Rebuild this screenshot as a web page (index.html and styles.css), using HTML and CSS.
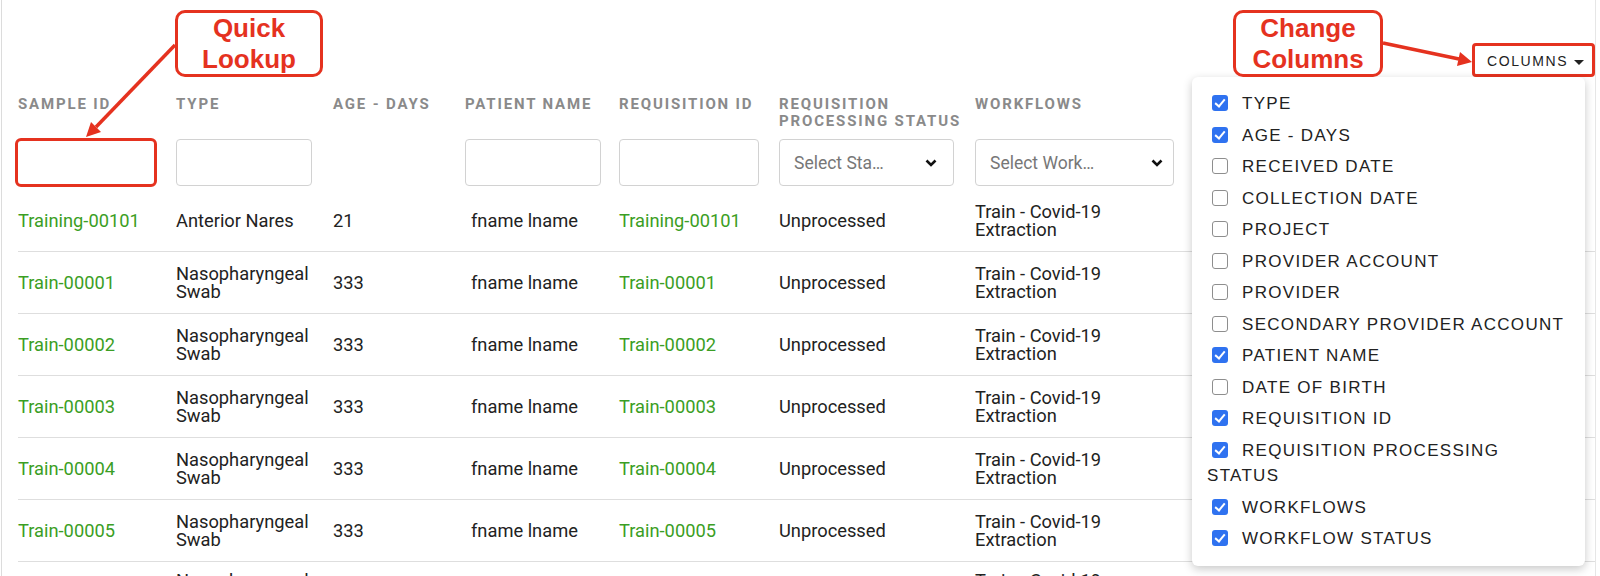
FILE: index.html
```html
<!DOCTYPE html>
<html lang="en">
	<head>
		<meta charset="utf-8" />
		<title>Samples</title>
		<link rel="stylesheet" href="styles.css">
	</head>
	<body>
		<div class="page">
			<div class="toolbar">
				<button class="columns-btn">COLUMNS<span class="caret"></span></button>
			</div>

			<table class="samples">
				<colgroup>
					<col style="width:158px"><col style="width:157px"><col style="width:132px"><col style="width:154px">
					<col style="width:160px"><col style="width:196px"><col style="width:215px"><col>
				</colgroup>
				<thead>
					<tr class="labels">
						<th>SAMPLE ID</th>
						<th>TYPE</th>
						<th>AGE - DAYS</th>
						<th>PATIENT NAME</th>
						<th>REQUISITION ID</th>
						<th>REQUISITION PROCESSING STATUS</th>
						<th>WORKFLOWS</th>
						<th></th>
					</tr>
					<tr class="filters">
						<th><input class="filter lookup" type="text"></th>
						<th><input class="filter" type="text"></th>
						<th></th>
						<th><input class="filter" type="text"></th>
						<th><input class="filter req" type="text"></th>
						<th><div class="select status">Select Sta…<svg width="12" height="8" viewBox="0 0 12 8"><path d="M1.5 1.5 L6 6 L10.5 1.5" fill="none" stroke="#111" stroke-width="2.6"/></svg></div></th>
						<th><div class="select flows">Select Work…<svg width="12" height="8" viewBox="0 0 12 8"><path d="M1.5 1.5 L6 6 L10.5 1.5" fill="none" stroke="#111" stroke-width="2.6"/></svg></div></th>
						<th></th>
					</tr>
				</thead>
				<tbody>
					<tr>
						<td><a href="#">Training-00101</a></td>
						<td>Anterior Nares</td>
						<td>21</td>
						<td class="pname">fname lname</td>
						<td><a href="#">Training-00101</a></td>
						<td>Unprocessed</td>
						<td>Train - Covid-19 Extraction</td>
						<td></td>
					</tr>
					<tr>
						<td><a href="#">Train-00001</a></td>
						<td>Nasopharyngeal Swab</td>
						<td>333</td>
						<td class="pname">fname lname</td>
						<td><a href="#">Train-00001</a></td>
						<td>Unprocessed</td>
						<td>Train - Covid-19 Extraction</td>
						<td></td>
					</tr>
					<tr>
						<td><a href="#">Train-00002</a></td>
						<td>Nasopharyngeal Swab</td>
						<td>333</td>
						<td class="pname">fname lname</td>
						<td><a href="#">Train-00002</a></td>
						<td>Unprocessed</td>
						<td>Train - Covid-19 Extraction</td>
						<td></td>
					</tr>
					<tr>
						<td><a href="#">Train-00003</a></td>
						<td>Nasopharyngeal Swab</td>
						<td>333</td>
						<td class="pname">fname lname</td>
						<td><a href="#">Train-00003</a></td>
						<td>Unprocessed</td>
						<td>Train - Covid-19 Extraction</td>
						<td></td>
					</tr>
					<tr>
						<td><a href="#">Train-00004</a></td>
						<td>Nasopharyngeal Swab</td>
						<td>333</td>
						<td class="pname">fname lname</td>
						<td><a href="#">Train-00004</a></td>
						<td>Unprocessed</td>
						<td>Train - Covid-19 Extraction</td>
						<td></td>
					</tr>
					<tr>
						<td><a href="#">Train-00005</a></td>
						<td>Nasopharyngeal Swab</td>
						<td>333</td>
						<td class="pname">fname lname</td>
						<td><a href="#">Train-00005</a></td>
						<td>Unprocessed</td>
						<td>Train - Covid-19 Extraction</td>
						<td></td>
					</tr>
					<tr class="cut">
						<td></td>
						<td>Nasopharyngeal Swab</td>
						<td></td>
						<td></td>
						<td></td>
						<td></td>
						<td>Train - Covid-19 Extraction</td>
						<td></td>
					</tr>
				</tbody>
			</table>

			<!-- column picker, open -->
			<div class="menu">
				<div class="opt"><span class="box on"></span>TYPE</div>
				<div class="opt"><span class="box on"></span>AGE - DAYS</div>
				<div class="opt"><span class="box"></span>RECEIVED DATE</div>
				<div class="opt"><span class="box"></span>COLLECTION DATE</div>
				<div class="opt"><span class="box"></span>PROJECT</div>
				<div class="opt"><span class="box"></span>PROVIDER ACCOUNT</div>
				<div class="opt"><span class="box"></span>PROVIDER</div>
				<div class="opt"><span class="box"></span>SECONDARY PROVIDER ACCOUNT</div>
				<div class="opt"><span class="box on"></span>PATIENT NAME</div>
				<div class="opt"><span class="box"></span>DATE OF BIRTH</div>
				<div class="opt"><span class="box on"></span>REQUISITION ID</div>
				<div class="opt"><span class="box on"></span>REQUISITION PROCESSING STATUS</div>
				<div class="opt"><span class="box on"></span>WORKFLOWS</div>
				<div class="opt"><span class="box on"></span>WORKFLOW STATUS</div>
			</div>

			<!-- annotations -->
			<div class="callout quick">Quick<br>Lookup</div>
			<div class="callout change">Change<br>Columns</div>
			<svg class="arrows" width="1600" height="576" viewBox="0 0 1600 576">
				<line x1="175" y1="45" x2="96" y2="127" stroke="#e5321f" stroke-width="3.5"/>
				<polygon points="86,137 101,132 91,122" fill="#e5321f"/>
				<line x1="1383" y1="43" x2="1459" y2="59" stroke="#e5321f" stroke-width="3.5"/>
				<polygon points="1472,62 1457,66 1460,52" fill="#e5321f"/>
			</svg>
		</div>
	</body>
</html>
```

FILE: styles.css
```css
body{
	margin: 0;
	background-color: #fff;
	font-family: Roboto, "Liberation Sans", sans-serif;
	color: #222;
}

.page{
	position: relative;
	margin-left: 1px;
	width: 1593px;
	height: 576px;
	overflow: hidden;
	border-left: 1px solid #dcdcdc;
	border-right: 1px solid #e6e6e6;
}

.toolbar{
	height: 94px;
	box-sizing: border-box;
	padding-top: 43px;
	display: flex;
	justify-content: flex-end;
	align-items: flex-start;
}

.columns-btn{
	height: 34px;
	width: 123px;
	box-sizing: border-box;
	padding: 2px 0 0 12px;
	border: 3px solid #e5321f;
	border-radius: 4px;
	background: #fff;
	display: flex;
	align-items: center;
	font-family: "Liberation Sans", sans-serif;
	font-size: 14px;
	letter-spacing: 1.6px;
	color: #222;
}

.caret{
	margin-left: 6px;
	margin-top: 2px;
	border-left: 5px solid transparent;
	border-right: 5px solid transparent;
	border-top: 5px solid #222;
}

.samples{
	margin-left: 16px;
	width: 1577px;
	table-layout: fixed;
	border-collapse: collapse;
}

.samples th{
	text-align: left;
	padding: 0;
}

.labels th{
	height: 43px;
	padding-top: 2px;
	vertical-align: top;
	font-size: 15px;
	line-height: 17px;
	font-weight: bold;
	letter-spacing: 1.85px;
	color: #8a8a8a;
}

.filters th{
	height: 47px;
	padding-bottom: 4px;
	vertical-align: top;
}

.filter{
	display: block;
	width: 136px;
	height: 47px;
	box-sizing: border-box;
	border: 1px solid #d2d2d2;
	border-radius: 4px;
	background: #fff;
	margin: 0;
}

.filter.lookup{
	width: 142px;
	height: 49px;
	margin: -1px 0 -1px -3px;
	border: 3px solid #e5321f;
	border-radius: 6px;
}

.filter.req{
	width: 140px;
}

.select{
	height: 47px;
	box-sizing: border-box;
	border: 1px solid #d2d2d2;
	border-radius: 4px;
	display: flex;
	align-items: center;
	justify-content: space-between;
	padding: 0 16px 0 14px;
	font-size: 17.5px;
	font-weight: normal;
	color: #777;
	letter-spacing: 0;
}

.select.status{
	width: 175px;
}

.select.flows{
	width: 199px;
	padding-right: 10px;
}

.samples td{
	height: 61px;
	padding: 0 20px 0 0;
	vertical-align: middle;
	font-size: 18.3px;
	line-height: 17.5px;
	border-bottom: 1px solid #dedede;
}

.samples tr.cut td{
	vertical-align: top;
	padding-top: 10px;
}

.samples td.pname{
	padding-left: 6px;
}

.samples a{
	color: #3b9e24;
	text-decoration: none;
}

.menu{
	position: absolute;
	left: 1190px;
	top: 77px;
	width: 393px;
	height: 489px;
	box-sizing: border-box;
	padding: 11px 15px;
	background: #fff;
	border-radius: 6px;
	box-shadow: 0 3px 10px rgba(0, 0, 0, 0.22);
	font-family: "Liberation Sans", sans-serif;
	font-size: 17px;
	letter-spacing: 1.3px;
	color: #222;
}

.opt{
	padding: 3px 0;
	line-height: 25.5px;
}

.box{
	display: inline-block;
	width: 16px;
	height: 16px;
	box-sizing: border-box;
	margin: 0 14px 0 5px;
	vertical-align: -2px;
	border: 1px solid #8e8e8e;
	border-radius: 3px;
	background: #fff;
}

.box.on{
	border: none;
	background-color: #2f72f0;
	position: relative;
}

.box.on::after{
	content: "";
	position: absolute;
	left: 5px;
	top: 2px;
	width: 4px;
	height: 8px;
	border-right: 2.6px solid #fff;
	border-bottom: 2.6px solid #fff;
	transform: rotate(40deg);
}

.callout{
	position: absolute;
	top: 10px;
	height: 67px;
	box-sizing: border-box;
	border: 3px solid #e5321f;
	border-radius: 10px;
	background: #fff;
	display: flex;
	align-items: center;
	justify-content: center;
	text-align: center;
	font-family: "Liberation Sans", Arial, sans-serif;
	font-weight: bold;
	font-size: 26px;
	line-height: 31px;
	color: #e5321f;
}

.callout.quick{
	left: 173px;
	width: 148px;
}

.callout.change{
	left: 1231px;
	width: 150px;
}

.arrows{
	position: absolute;
	left: -2px;
	top: 0;
	pointer-events: none;
}
```
